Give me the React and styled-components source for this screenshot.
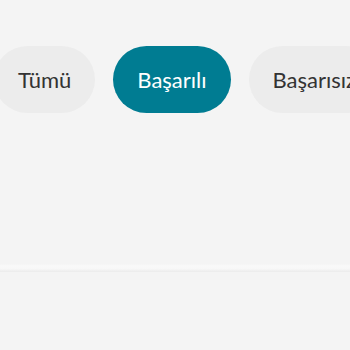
import { createGlobalStyle, styled } from "styled-components";

const GlobalStyle = createGlobalStyle`
  html, body {
    margin: 0;
    padding: 0;
    background: #f4f4f4;
    font-family: Lato, "Open Sans", sans-serif;
  }
`;

const Page = styled.div`
  width: 350px;
  height: 350px;
  overflow: hidden;
  display: flex;
  flex-direction: column;
`;

const FilterBar = styled.div`
  display: flex;
  gap: 18px;
  padding-top: 46px;
  margin-left: -6px;
  white-space: nowrap;
`;

const Pill = styled.button`
  flex: none;
  height: 67px;
  padding: 0 24px;
  border: 0;
  border-radius: 34px;
  font-family: inherit;
  font-size: 22px;
  font-weight: 400;
  background: ${({ $active }) => ($active ? "#007c92" : "#ececec")};
  color: ${({ $active }) => ($active ? "#ffffff" : "#333333")};
`;

const Divider = styled.div`
  margin-top: 151px;
  height: 8px;
  background: linear-gradient(#f4f4f4, #f9f9f9 25%, #f7f7f7 60%, #ebebeb);
`;

const filters = ["Tümü", "Başarılı", "Başarısız"];

function App() {
  return (
    <>
      <GlobalStyle />
      <Page>
        <FilterBar>
          {filters.map((f, i) => (
            <Pill key={f} $active={i === 1}>
              {f}
            </Pill>
          ))}
        </FilterBar>
        <Divider />
      </Page>
    </>
  );
}

export default App;
